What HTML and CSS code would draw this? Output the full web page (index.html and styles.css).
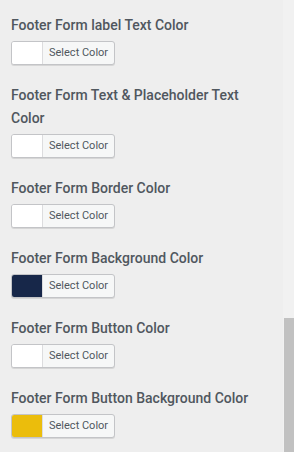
FILE: index.html
```html
<!DOCTYPE html>
<html>
<head>
    <title>Footer Form Colors</title>
    <link rel="stylesheet" href="styles.css">
</head>
<body>
    <div class="panel">
        <div class="control">
            <div class="control-title">Footer Form label Text Color</div>
            <button class="color-result"><span class="swatch"></span><span class="color-text">Select Color</span></button>
        </div>
        <div class="control">
            <div class="control-title">Footer Form Text &amp; Placeholder Text Color</div>
            <button class="color-result"><span class="swatch"></span><span class="color-text">Select Color</span></button>
        </div>
        <div class="control">
            <div class="control-title">Footer Form Border Color</div>
            <button class="color-result"><span class="swatch"></span><span class="color-text">Select Color</span></button>
        </div>
        <div class="control">
            <div class="control-title">Footer Form Background Color</div>
            <button class="color-result"><span class="swatch swatch-navy"></span><span class="color-text">Select Color</span></button>
        </div>
        <div class="control">
            <div class="control-title">Footer Form Button Color</div>
            <button class="color-result"><span class="swatch"></span><span class="color-text">Select Color</span></button>
        </div>
        <div class="control">
            <div class="control-title">Footer Form Button Background Color</div>
            <button class="color-result"><span class="swatch swatch-gold"></span><span class="color-text">Select Color</span></button>
        </div>
    </div>
    <div class="scrollbar">
        <div class="scroll-thumb"></div>
    </div>
</body>
</html>
```

FILE: styles.css
```css
html, body {
    margin: 0;
    height: 100%;
}

body {
    display: flex;
    background: #eeeeee;
    font-family: Roboto, "Liberation Sans", sans-serif;
    overflow: hidden;
}

.panel {
    flex: 1;
    padding: 14px 0 0 11px;
}

.control {
    margin-bottom: 19px;
    width: 260px;
}

.control-title {
    font-size: 14px;
    font-weight: 500;
    line-height: 23px;
    color: #50575e;
    margin-bottom: 4px;
}

.color-result {
    display: flex;
    height: 24px;
    padding: 0;
    border: 1px solid #c3c4c7;
    border-radius: 3px;
    background: #f6f7f7;
    box-shadow: 0 1px 0 #d6d6d6;
    overflow: hidden;
    cursor: pointer;
}

.swatch {
    width: 30px;
    height: 100%;
    background: #ffffff;
    border-right: 1px solid #dcdcde;
}

.swatch-navy {
    background: #172749;
}

.swatch-gold {
    background: #ebbd0c;
}

.color-text {
    padding: 0 6px 0 6px;
    font-family: Roboto, "Liberation Sans", sans-serif;
    font-size: 11px;
    line-height: 22px;
    color: #50575e;
}

.scrollbar {
    width: 11px;
    background: #f1f1f1;
    display: flex;
    flex-direction: column;
    justify-content: flex-end;
}

.scroll-thumb {
    height: 134px;
    margin-left: 1px;
    background: #c1c1c1;
}
```
